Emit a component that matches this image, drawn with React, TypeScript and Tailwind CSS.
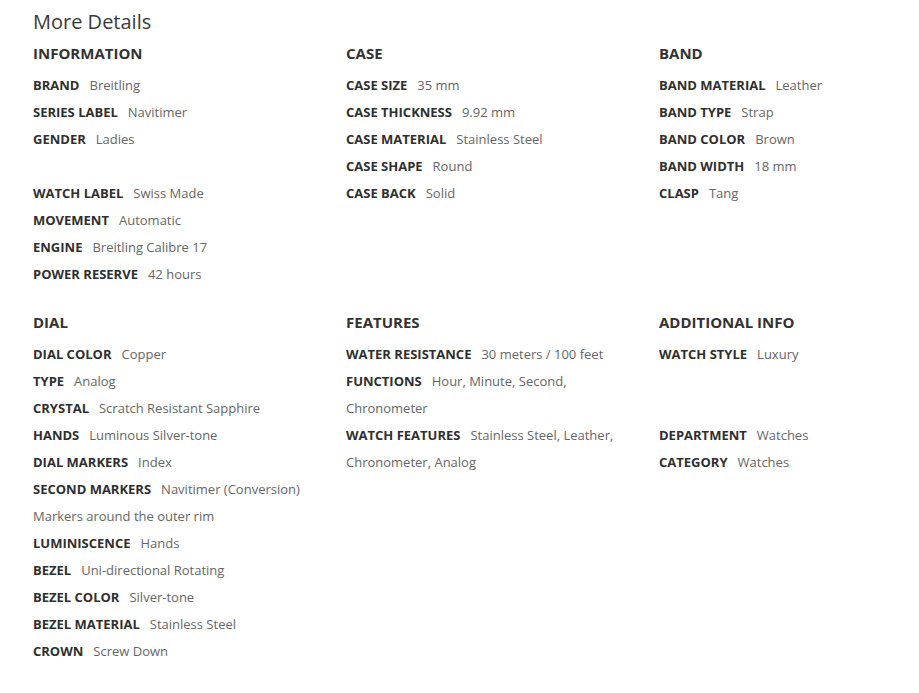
import React from "react";

type Row = { label?: string; value?: string };
type Section = { title: string; rows: Row[] };

const top: Section[] = [
  {
    title: "INFORMATION",
    rows: [
      { label: "BRAND", value: "Breitling" },
      { label: "SERIES LABEL", value: "Navitimer" },
      { label: "GENDER", value: "Ladies" },
      {},
      { label: "WATCH LABEL", value: "Swiss Made" },
      { label: "MOVEMENT", value: "Automatic" },
      { label: "ENGINE", value: "Breitling Calibre 17" },
      { label: "POWER RESERVE", value: "42 hours" },
    ],
  },
  {
    title: "CASE",
    rows: [
      { label: "CASE SIZE", value: "35 mm" },
      { label: "CASE THICKNESS", value: "9.92 mm" },
      { label: "CASE MATERIAL", value: "Stainless Steel" },
      { label: "CASE SHAPE", value: "Round" },
      { label: "CASE BACK", value: "Solid" },
    ],
  },
  {
    title: "BAND",
    rows: [
      { label: "BAND MATERIAL", value: "Leather" },
      { label: "BAND TYPE", value: "Strap" },
      { label: "BAND COLOR", value: "Brown" },
      { label: "BAND WIDTH", value: "18 mm" },
      { label: "CLASP", value: "Tang" },
    ],
  },
];

const bottom: Section[] = [
  {
    title: "DIAL",
    rows: [
      { label: "DIAL COLOR", value: "Copper" },
      { label: "TYPE", value: "Analog" },
      { label: "CRYSTAL", value: "Scratch Resistant Sapphire" },
      { label: "HANDS", value: "Luminous Silver-tone" },
      { label: "DIAL MARKERS", value: "Index" },
      { label: "SECOND MARKERS", value: "Navitimer (Conversion) Markers around the outer rim" },
      { label: "LUMINISCENCE", value: "Hands" },
      { label: "BEZEL", value: "Uni-directional Rotating" },
      { label: "BEZEL COLOR", value: "Silver-tone" },
      { label: "BEZEL MATERIAL", value: "Stainless Steel" },
      { label: "CROWN", value: "Screw Down" },
    ],
  },
  {
    title: "FEATURES",
    rows: [
      { label: "WATER RESISTANCE", value: "30 meters / 100 feet" },
      { label: "FUNCTIONS", value: "Hour, Minute, Second, Chronometer" },
      { label: "WATCH FEATURES", value: "Stainless Steel, Leather, Chronometer, Analog" },
    ],
  },
  {
    title: "ADDITIONAL INFO",
    rows: [
      { label: "WATCH STYLE", value: "Luxury" },
      {},
      {},
      { label: "DEPARTMENT", value: "Watches" },
      { label: "CATEGORY", value: "Watches" },
    ],
  },
];

function Column({ s }: { s: Section }) {
  return (
    <div className="w-[283px]">
      <div className="text-[15px] leading-[22px] font-bold text-[#333] mb-[8px]">{s.title}</div>
      {s.rows.map((r, i) =>
        r.label ? (
          <div key={i} className="text-[13px] leading-[27px]">
            <span className="font-bold text-[#2f2f2f]">{r.label}</span>
            <span className="text-[#666] ml-[10px]">{r.value}</span>
          </div>
        ) : (
          <div key={i} className="h-[27px]" />
        )
      )}
    </div>
  );
}

export default function App() {
  return (
    <div
      className="min-h-[693px] bg-white pl-[33px] pt-[8px]"
      style={{ fontFamily: '"Open Sans", "Noto Sans", sans-serif' }}
    >
      <div className="text-[20px] leading-[28px] text-[#3a3a3a]">More Details</div>
      <div className="mt-[6px] grid grid-cols-[313px_313px_1fr]">
        {top.map((s) => (
          <Column key={s.title} s={s} />
        ))}
      </div>
      <div className="mt-[23px] grid grid-cols-[313px_313px_1fr]">
        {bottom.map((s) => (
          <Column key={s.title} s={s} />
        ))}
      </div>
    </div>
  );
}
